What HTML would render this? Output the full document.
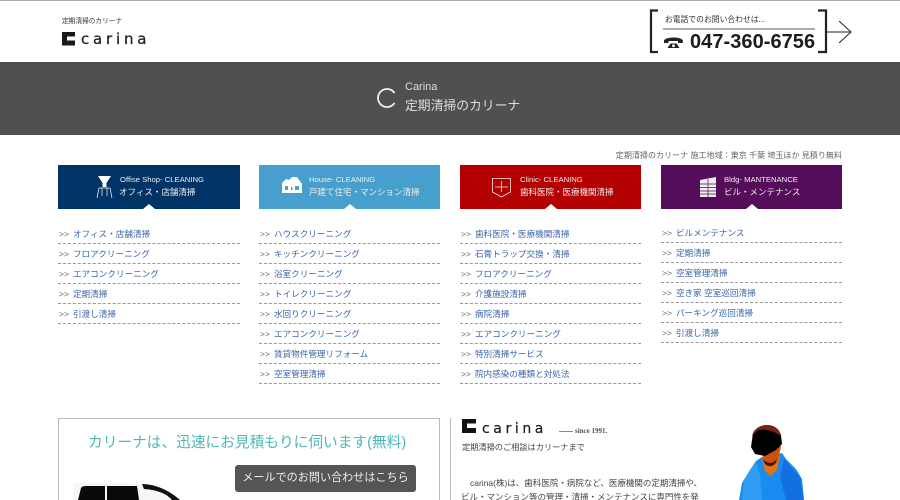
<!DOCTYPE html>
<html lang="ja"><head><meta charset="utf-8"><title>定期清掃のカリーナ</title>
<style>
html,body{margin:0;padding:0;background:#fff;width:900px;height:500px;overflow:hidden}
#w{position:relative;width:900px;height:500px;overflow:hidden;font-family:"Liberation Sans","Noto Sans CJK JP",sans-serif}
.a{position:absolute;white-space:nowrap}
.box{position:absolute;top:165px;height:44px;color:#eee}
.box .t1{position:absolute;top:9px;font-size:7.700px;line-height:12px;white-space:nowrap}
.box .t2{position:absolute;top:20px;font-size:8.500px;line-height:14px;white-space:nowrap}
.box i{position:absolute;bottom:0;left:50%;margin-left:-6px;width:0;height:0;border:6px solid transparent;border-top:0;border-bottom:5px solid #fff}
ul{position:absolute;margin:0;padding:0;list-style:none}
li{height:19px;border-bottom:1px dashed #999;font-size:8.600px;line-height:20px;color:#3a66a8;white-space:nowrap;padding-left:1px}
li b{font-weight:normal;color:#666;font-size:8.500px;margin-right:4px}
</style></head><body><div id="w">
<div class="a" style="left:0;top:0;width:900px;height:1px;background:#aaa"></div>
<div class="a" style="left:62px;top:17px;font-size:6.700px;line-height:10px;color:#333">定期清掃のカリーナ</div>
<svg class="a" style="left:62px;top:32px" width="14" height="14" viewBox="0 0 14 14"><path d="M0 0H13V4.500H5V8.500H13V13.500H0Z" fill="#1a1a1a"/></svg>
<div class="a" style="left:81px;top:29px;font-size:15px;line-height:20px;letter-spacing:3.800px;color:#222;font-family:'DejaVu Sans',sans-serif;-webkit-text-stroke:.25px #222">carina</div>

<svg class="a" style="left:648px;top:8px" width="206" height="48" viewBox="0 0 206 48" fill="none">
<path d="M10 2.500H3V44H10M170 2.500H178V44H170" stroke="#222" stroke-width="2.200"/>
<path d="M15 21H167" stroke="#555" stroke-width="1"/>
<path d="M179 24H203M191 13L203 24L191 35" stroke="#222" stroke-width="1"/>
<path d="M16 32.500c2-4 17-4 19 0l-.5 2.500h-4.500v-2h-9.500v2h-4.500z" fill="#222"/><path d="M19.500 40l3-4.500h6l3 4.500z" fill="#222"/><circle cx="25.500" cy="37.800" r="1.400" fill="#fff"/>
</svg>
<div class="a" style="left:665px;top:14px;font-size:7.800px;line-height:12px;color:#333">お電話でのお問い合わせは...</div>
<div class="a" style="left:690px;top:30px;font-size:20px;line-height:24px;font-weight:bold;color:#1c1c1c;letter-spacing:.05px">047-360-6756</div>

<div class="a" style="left:0;top:62px;width:900px;height:73px;background:#505050"></div>
<svg class="a" style="left:375px;top:87px" width="24" height="22" viewBox="0 0 24 22" fill="none"><path d="M19.500 6A9 9 0 1 0 19.500 16" stroke="#eee" stroke-width="1.800"/></svg>
<div class="a" style="left:405px;top:80px;font-size:11px;line-height:14px;color:#ddd">Carina</div>
<div class="a" style="left:405px;top:96px;font-size:12.800px;line-height:19px;color:#ddd">定期清掃のカリーナ</div>

<div class="a" style="right:58px;top:150px;font-size:8.050px;line-height:12px;color:#666">定期清掃のカリーナ 施工地域：東京 千葉 埼玉ほか 見積り無料</div>

<div class="box" style="left:58px;width:182px;background:#003366">
<svg class="a" style="left:38px;top:11px" width="17" height="23" viewBox="0 0 17 23" fill="none"><path d="M2 0H15L10.500 7V11H6.500V7Z" fill="#fff"/><path d="M3 12H14M3 12L1 22M14 12L16 22M6 12V20M11 12V20" stroke="#fff" stroke-width=".7"/></svg>
<span class="t1" style="left:62px">Offise Shop- CLEANING</span><span class="t2" style="left:61px">オフィス・店舗清掃</span><i></i></div>
<div class="box" style="left:259px;width:181px;background:#479fcd">
<svg class="a" style="left:23px;top:12px" width="20" height="17" viewBox="0 0 20 17"><path d="M0 6L4 2L7 3L10 0H15L20 7V16H0Z" fill="#fff"/><path d="M3 9h3v4H3zM9 10h1.500v3H9zM13 9h4v4h-4z" fill="#479fcd"/></svg>
<span class="t1" style="left:50px">House- CLEANING</span><span class="t2" style="left:50px">戸建て住宅・マンション清掃</span><i></i></div>
<div class="box" style="left:460px;width:181px;background:#b30000">
<svg class="a" style="left:32px;top:13px" width="19" height="20" viewBox="0 0 19 20" fill="none" stroke="#eee" stroke-width=".8"><path d="M.5.500H18.500V14L9.500 19L.5 14ZM9.500 3V14M3 9H16"/></svg>
<span class="t1" style="left:60px">Clinic- CLEANING</span><span class="t2" style="left:60px">歯科医院・医療機関清掃</span><i></i></div>
<div class="box" style="left:661px;width:181px;background:#560d59">
<svg class="a" style="left:39px;top:12px" width="16" height="20" viewBox="0 0 16 20"><path d="M0 3L16 0V20H0Z" fill="#eee"/><path d="M0 7H16M0 10.500H16M0 14H16M0 17H16M8 2V20" stroke="#560d59" stroke-width=".7"/></svg>
<span class="t1" style="left:63px">Bldg- MANTENANCE</span><span class="t2" style="left:63px">ビル・メンテナンス</span><i></i></div>

<ul style="left:58px;top:224px;width:182px">
<li><b>&gt;&gt;</b>オフィス・店舗清掃</li><li><b>&gt;&gt;</b>フロアクリーニング</li><li><b>&gt;&gt;</b>エアコンクリーニング</li><li><b>&gt;&gt;</b>定期清掃</li><li><b>&gt;&gt;</b>引渡し清掃</li></ul>
<ul style="left:259px;top:224px;width:181px">
<li><b>&gt;&gt;</b>ハウスクリーニング</li><li><b>&gt;&gt;</b>キッチンクリーニング</li><li><b>&gt;&gt;</b>浴室クリーニング</li><li><b>&gt;&gt;</b>トイレクリーニング</li><li><b>&gt;&gt;</b>水回りクリーニング</li><li><b>&gt;&gt;</b>エアコンクリーニング</li><li><b>&gt;&gt;</b>賃貸物件管理リフォーム</li><li><b>&gt;&gt;</b>空室管理清掃</li></ul>
<ul style="left:460px;top:224px;width:181px">
<li><b>&gt;&gt;</b>歯科医院・医療機関清掃</li><li><b>&gt;&gt;</b>石膏トラップ交換・清掃</li><li><b>&gt;&gt;</b>フロアクリーニング</li><li><b>&gt;&gt;</b>介護施設清掃</li><li><b>&gt;&gt;</b>病院清掃</li><li><b>&gt;&gt;</b>エアコンクリーニング</li><li><b>&gt;&gt;</b>特別清掃サービス</li><li><b>&gt;&gt;</b>院内感染の種類と対処法</li></ul>
<ul style="left:661px;top:223px;width:181px">
<li><b>&gt;&gt;</b>ビルメンテナンス</li><li><b>&gt;&gt;</b>定期清掃</li><li><b>&gt;&gt;</b>空室管理清掃</li><li><b>&gt;&gt;</b>空き家 空室巡回清掃</li><li><b>&gt;&gt;</b>パーキング巡回清掃</li><li><b>&gt;&gt;</b>引渡し清掃</li></ul>

<div class="a" style="left:58px;top:418px;width:380px;height:90px;border:1px solid #bbb"></div>
<div class="a" style="left:88px;top:432px;font-size:14.700px;line-height:22px;color:#4db8b8">カリーナは、迅速にお見積もりに伺います(無料)</div>
<div class="a" style="left:235px;top:465px;width:181px;height:27px;background:#555;border-radius:3px;color:#eee;font-size:11.100px;line-height:27px;text-align:center">メールでのお問い合わせはこちら</div>
<svg class="a" style="left:70px;top:480px" width="115" height="20" viewBox="0 0 115 20"><path d="M3 20V5Q3 3 6 3L60 3Q75 4 110 20Z" fill="#f6f6f6"/><path d="M8 20L11 8Q12 6 16 6H35V20ZM37 6H67L69 20H37Z" fill="#0a0a0a"/><path d="M72 4C86 4 100 11 110 20H102C97 14 88 10 74 9Z" fill="#111"/></svg>

<div class="a" style="left:450px;top:418px;width:1px;height:82px;background:#bbb"></div>
<svg class="a" style="left:462px;top:419px" width="14" height="14" viewBox="0 0 14 14"><path d="M0 0H14V4.500H5V9H14V14H0Z" fill="#111"/></svg>
<div class="a" style="left:482px;top:419px;font-size:14px;line-height:20px;letter-spacing:3.600px;color:#222;font-family:'DejaVu Sans',sans-serif;-webkit-text-stroke:.25px #222">carina</div>
<div class="a" style="left:559px;top:426px;font-size:7px;line-height:10px;font-weight:bold;color:#555;font-family:'Liberation Serif',serif"><span style="display:inline-block;width:14px;height:1px;background:#888;vertical-align:middle;margin-right:2px"></span>since 1991.</div>
<div class="a" style="left:462px;top:441px;font-size:8.200px;line-height:13px;color:#444">定期清掃のご相談はカリーナまで</div>
<div class="a" style="left:470px;top:476px;font-size:8.500px;line-height:14px;color:#444">carina(株)は、歯科医院・病院など、医療機関の定期清掃や、</div>
<div class="a" style="left:461px;top:490px;font-size:8.500px;line-height:14px;color:#444">ビル・マンション等の管理・清掃・メンテナンスに専門性を発</div>

<svg class="a" style="left:720px;top:415px" width="90" height="85" viewBox="0 0 90 85">
<path d="M19 85L22 68L30 55L36 46L42 42L62 38L66 44L76 54L82 64L84 85Z" fill="#1a8cf0"/>
<path d="M30 55L36 46L40 60L42 85H22L24 66Z" fill="#2f9cf5"/>
<path d="M64 44L60 62L66 85H84L80 62Z" fill="#1470e0"/>
<path d="M42 43L45 56L50 61L57 55L60 41Z" fill="#e8720f"/>
<path d="M42 36L44 48L50 52L57 48L61 32L60 30H42Z" fill="#c9520e"/>
<path d="M43 44Q50 52 57 44L55 49Q50 53 45 49Z" fill="#3a1a0c"/>
<path d="M31 32L33 18Q37 10 48 10Q58 11 61 20L62 29L56 35L45 41L35 39Z" fill="#000"/>
<path d="M32 21Q35 11 47 10Q58 10 61 21Q50 13 38 15Z" fill="#7a2410"/>
</svg>
</div></body></html>
